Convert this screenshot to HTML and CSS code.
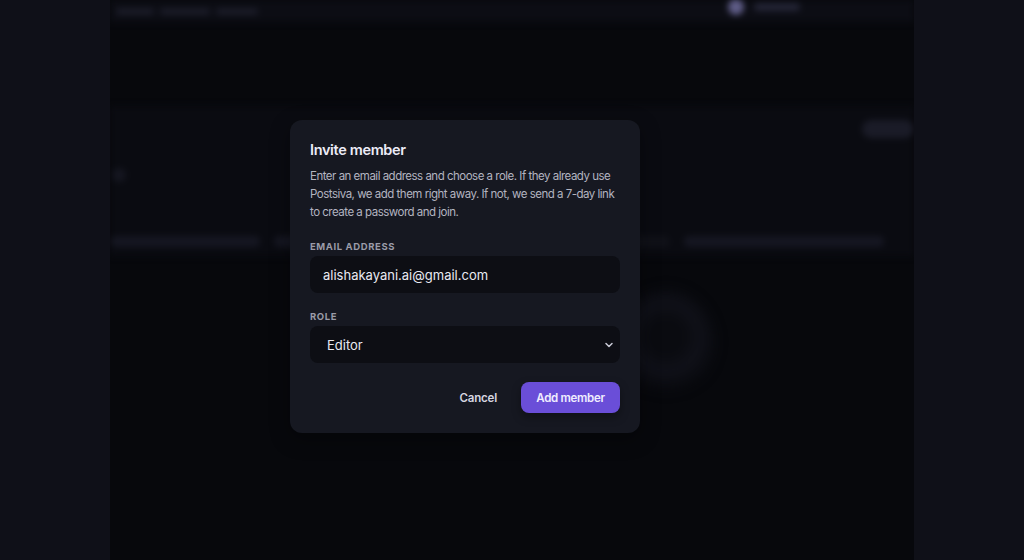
FILE: index.html
```
<!DOCTYPE html>
<html lang="en">
<head>
<meta charset="utf-8">
<title>Invite member</title>
<link rel="stylesheet" href="styles.css">
</head>
<body>
<div class="page">
  <aside class="side"></aside>
  <main class="main">
    <div class="backdrop">
      <header class="bg-top">
        <div class="bg-title"><span class="bg-word w1"></span><span class="bg-word w2"></span><span class="bg-word w3"></span></div>
        <div class="bg-user"><span class="bg-avatar"></span><span class="bg-name"></span></div>
      </header>
      <section class="bg-card">
        <div class="bg-row"><span class="bg-pill"></span></div>
        <div class="bg-dot"></div>
      </section>
      <div class="bg-line"><span class="seg s1"></span><span class="seg s2"></span><span class="seg s3"></span><span class="seg s4"></span></div>
      <div class="bg-ring"></div>
    </div>
    <div class="overlay">
      <form class="modal">
        <h2 class="modal-title">Invite member</h2>
        <p class="modal-text">Enter an email address and choose a role. If they already use Postsiva, we add them right away. If not, we send a 7-day link to create a password and join.</p>
        <label class="field-label">Email address</label>
        <div class="field">alishakayani.ai@gmail.com</div>
        <label class="field-label second">Role</label>
        <div class="field select">
          <span>Editor</span>
          <svg class="chevron" width="10" height="10" viewBox="0 0 10 10"><path d="M2 3.5 L5 6.5 L8 3.5" fill="none" stroke="#c9cad6" stroke-width="1.5" stroke-linecap="round" stroke-linejoin="round"/></svg>
        </div>
        <div class="actions">
          <button type="button" class="btn-cancel">Cancel</button>
          <button type="button" class="btn-primary">Add member</button>
        </div>
      </form>
    </div>
  </main>
  <aside class="side"></aside>
</div>
</body>
</html>
```
FILE: styles.css
```
* { box-sizing: border-box; }
html, body { margin: 0; padding: 0; }
body {
  background: #0f1017;
  font-family: Inter, "Noto Sans", sans-serif;
  color: #e6e6ee;
  width: 1024px;
  height: 560px;
  overflow: hidden;
}
.page {
  display: flex;
  height: 560px;
}
.side {
  width: 110px;
  flex: none;
  background: #0f1018;
}
.main {
  flex: 1;
  position: relative;
  background: #07080c;
  overflow: hidden;
}
.backdrop {
  height: 100%;
  filter: blur(3px);
  position: relative;
}
.bg-top {
  display: flex;
  justify-content: space-between;
  align-items: center;
  padding: 0 114px 0 6px;
  height: 22px;
  background: #0c0d14;
}
.bg-title { display: flex; gap: 6px; }
.bg-word { height: 7px; border-radius: 3px; background: #1a1b27; }
.w1 { width: 38px; }
.w2 { width: 50px; }
.w3 { width: 42px; }
.bg-user { display: flex; align-items: center; gap: 10px; margin-top: -8px; }
.bg-avatar { width: 16px; height: 16px; border-radius: 50%; background: #5e5c86; }
.bg-name { width: 46px; height: 8px; border-radius: 4px; background: #232435; }
.bg-card {
  margin-top: 84px;
  height: 150px;
  background: #0a0b11;
  padding-top: 14px;
  position: relative;
}
.bg-row {
  display: flex;
  justify-content: flex-end;
}
.bg-pill { width: 52px; height: 18px; border-radius: 9px; background: #1a1b27; }
.bg-dot {
  position: absolute;
  left: 2px;
  top: 62px;
  width: 14px;
  height: 14px;
  border-radius: 50%;
  background: #151620;
}
.bg-line {
  position: absolute;
  left: 0;
  right: 30px;
  top: 236px;
  display: flex;
  gap: 14px;
}
.seg { height: 11px; border-radius: 5px; background: #151621; }
.s1 { width: 150px; }
.s2 { width: 60px; }
.s3 { flex: 1; background: #101118; }
.s4 { width: 200px; }
.bg-ring {
  position: absolute;
  left: 508px;
  top: 290px;
  width: 96px;
  height: 104px;
  border-radius: 50%;
  background: radial-gradient(circle at 50% 45%, #0a0b10 0 25%, #101119 45%, #0a0b10 68%, transparent 72%);
  filter: blur(5px);
}
.overlay {
  position: absolute;
  inset: 0;
}
.modal {
  position: absolute;
  left: 180px;
  top: 120px;
  width: 350px;
  background: #161821;
  border-radius: 12px;
  padding: 20px;
  display: flex;
  flex-direction: column;
  box-shadow: 0 6px 20px rgba(0,0,0,0.35);
}
.modal-title {
  margin: 0;
  font-size: 14.5px;
  line-height: 20px;
  font-weight: 600;
  color: #ecebf7;
  letter-spacing: -0.35px;
}
.modal-text {
  margin: 7px 0 0 0;
  font-size: 11.5px;
  line-height: 18px;
  color: #b3b4c0;
  letter-spacing: -0.5px;
  width: 306px;
}
.field-label {
  margin-top: 20px;
  font-size: 9.5px;
  line-height: 12px;
  font-weight: 700;
  letter-spacing: 0.6px;
  text-transform: uppercase;
  color: #9a9ba8;
}
.field-label.second { margin-top: 18px; }
.field {
  margin-top: 3px;
  height: 37px;
  border-radius: 8px;
  background: #0d0e14;
  display: flex;
  align-items: center;
  padding: 0 13px;
  font-size: 13px;
  color: #e9e9f1;
}
.field.select {
  justify-content: space-between;
  padding: 0 6px 0 17px;
}
.chevron { display: block; }
.actions {
  margin-top: 19px;
  display: flex;
  justify-content: flex-end;
  align-items: center;
  gap: 12px;
}
.btn-cancel {
  font-family: inherit;
  background: none;
  border: none;
  color: #d6d6e0;
  font-size: 11.5px;
  font-weight: 600;
  letter-spacing: -0.2px;
  padding: 8px 12px;
}
.btn-primary {
  font-family: inherit;
  width: 99px;
  height: 31px;
  border: none;
  border-radius: 8px;
  background: #6a4ed8;
  color: #f0ecff;
  font-size: 11.5px;
  font-weight: 600;
  letter-spacing: -0.3px;
  box-shadow: 0 4px 10px rgba(0,0,0,0.35);
}
```
